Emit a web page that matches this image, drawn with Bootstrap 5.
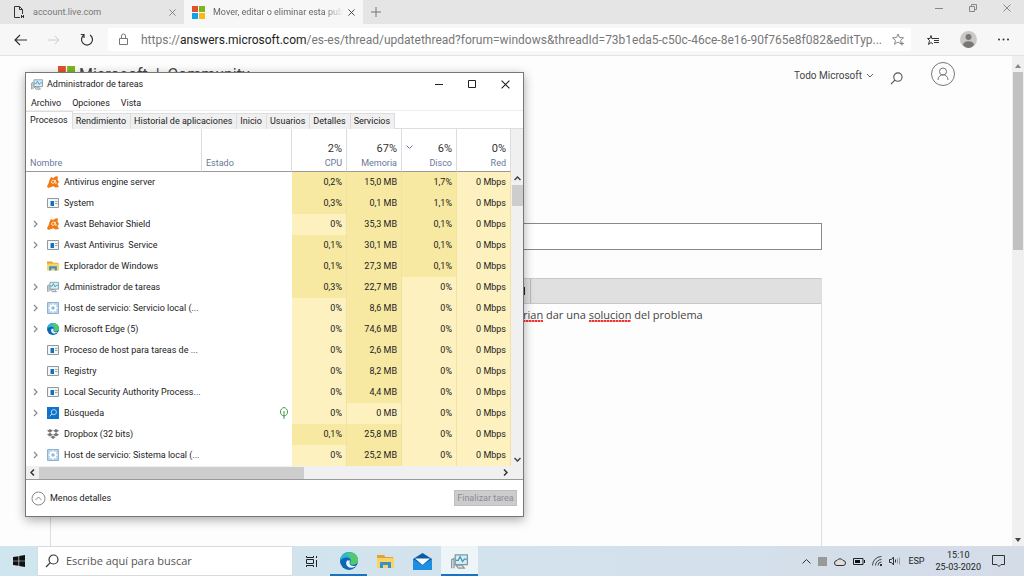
<!DOCTYPE html>
<html lang="es">
<head>
<meta charset="utf-8">
<meta name="viewport" content="width=device-width, initial-scale=1">
<title>Administrador de tareas</title>
<link href="https://cdn.jsdelivr.net/npm/bootstrap@5.3.0/dist/css/bootstrap.min.css" rel="stylesheet">
<style>
body{font-family:Roboto,"Open Sans","Noto Sans",sans-serif;font-size:9px;line-height:12px;color:#222;background:#fdfdfd}
button{font:inherit;color:inherit;background:none;border:0;padding:0}
a{color:inherit;text-decoration:none}
svg{display:block;flex:none}
input:focus{outline:0}
/* browser */
.tabstrip{height:24px;background:#e5e5e5;color:#777}
.btab{width:184px;padding:0 8px 0 13px}
.btab.on{background:#f7f7f7;width:179px;padding-left:8px;color:#666}
.fade-end{-webkit-mask-image:linear-gradient(90deg,#000 85%,transparent);mask-image:linear-gradient(90deg,#000 85%,transparent)}
.win-ctl{gap:26px;padding:4px 13px 0 0}
.toolbar{height:32px;background:#f7f7f7;border-bottom:1px solid #e3e3e3;padding:0 14px}
.nav-ctl{gap:20px;margin-right:14px}
.addr{height:23px;background:#fff;border-radius:2px;padding:0 6px 0 10px;font-size:12px;line-height:16px;color:#777}
.addr b{font-weight:400;color:#222}
.site-head{height:167px;padding:6px 57px 0 58px}
.brand{font-size:16px;line-height:22px;margin-top:2px;color:#444;font-weight:400}
.todo{font-size:10px;color:#444}
.site-form{margin-left:50px;margin-right:190px}
.title-box{height:27px;border:1px solid #888;background:#fff;margin-bottom:28px;width:100%}
.editor{border:1px solid #ddd;border-color:#c8c8c8 #ddd;border-bottom:0}
.ed-bar{height:25px;background:#e0e0e0;border-bottom:1px solid #c8c8c8;padding-left:450px}
.ed-bar button{width:30px;height:24px;border-right:1px solid #bbb;padding-right:5px}
.ed-text{padding:3px 8px 0 472px;font-size:11px;line-height:16px;color:#444;white-space:nowrap;font-family:"Open Sans","Noto Sans",sans-serif}
.ed-text u{text-decoration:none;background:repeating-linear-gradient(90deg,#e33 0 2px,#f99 2px 3px) 0 100%/100% 2px no-repeat}
.vbar{width:12px;background:#f0f0f0}
.vbar i{background:#c1c1c1;height:178px;width:10px}
/* task manager */
.tm{left:25px;top:72px;width:499px;border:1px solid #777;background:#fff;box-shadow:0 3px 10px #0005}
.tm-title{height:22px;padding:0 9px 0 5px}
.tm-menu{height:16px;gap:11px;padding-left:5px;border-bottom:1px solid #eee}
.tm-tabs{height:18px;border-bottom:1px solid #ddd;padding-top:2px}
.tm-tabs button{height:16px;background:#f0f0f0;border:1px solid #ddd;border-left:0;border-bottom:0;padding:0 4px 1px 3px;text-align:center}
.tm-tabs button.on{height:18px;margin-top:-2px;background:#fff;padding:0 4px 2px}
.procs{table-layout:fixed;width:485px;border-collapse:separate;border-spacing:0}
.procs th{font-weight:400;color:#68789a;height:43px;padding:0 5px 2px 4px;vertical-align:bottom;border-right:1px solid #ddd;border-bottom:1px solid #999}
.procs th.num strong{display:block;font-weight:400;font-size:11px;line-height:16px;color:#333}
.procs td{height:21px;padding:0 0 1px;white-space:nowrap}
.procs .num{text-align:right;padding-right:4px}
.procs td.num{background:#fdf1bf;border-right:1px solid #f0e2a4}
.procs td.hi{background:#f7e9a2}
.cell{gap:5px;padding-left:6px}
.tm-v{background:#f0f0f0;padding-top:43px}
.tm-v i{background:#cdcdcd;height:21px;width:11px}
.tm-h{height:14px;background:#f0f0f0;border-bottom:1px solid #999;padding-right:15px}
.tm-h i{background:#cdcdcd;width:265px;height:12px}
.tm-foot{height:36px;padding:0 6px 0 5px}
.end-btn{background:#ccc;border:1px solid #bfbfbf;color:#8a8d96;height:16px;width:63px}
/* taskbar */
.taskbar{height:30px;background:linear-gradient(90deg,#cfe6ee,#d3e3ed 45%,#d4dce8)}
.tb-btn{width:37px;height:30px;display:flex;align-items:center;justify-content:center}
.tb-run{box-shadow:inset 0 -2px #1874c0}
.tb-on{background:#eef5f9}
.tb-search{width:256px;background:#fff;border:1px solid #d5dde0;padding-left:7px;gap:7px}
.tb-search input{border:0;font-size:11px;line-height:16px;width:200px;padding:0;color:#555;background:none;font-family:"Open Sans","Noto Sans",sans-serif}
.tb-search input::placeholder{color:#555;opacity:1}
.tray{gap:7px;padding-right:18px}
</style>
</head>
<body>
<svg width="0" height="0" class="position-absolute" aria-hidden="true">
<symbol id="i-ms" viewBox="0 0 13 13"><path fill="#e0522a" d="M0 0h6v6H0z"/><path fill="#7db51e" d="M7 0h6v6H7z"/><path fill="#12a0e8" d="M0 7h6v6H0z"/><path fill="#fbb915" d="M7 7h6v6H7z"/></symbol>
<symbol id="i-x" viewBox="0 0 8 8"><path d="M.5.5l7 7m0-7l-7 7" stroke="currentColor" fill="none"/></symbol>
<symbol id="i-chev" viewBox="0 0 10 10"><path d="M2 2l3 3-3 3" stroke="currentColor" stroke-width="1.200" fill="none"/></symbol>
<symbol id="i-avast" viewBox="0 0 12 12"><path fill="#f27a13" d="M4 1l2 1 3-1.800L11 .5l-.5 3L12 6l-1.500 2 1.500 3-3.500.5-2-1.300L1 12 0 10l1.500-2.500L2.500 4z"/><path d="M8 4.500c-1.500-1-3.500 0-3.500 1.500s2.500 2 3.200.2L8.200 4v3c.4.800 1.300.6 1.400-.4" stroke="#fff" fill="none" stroke-width=".8"/></symbol>
<symbol id="i-app" viewBox="0 0 12 10"><path d="M.5.500h11v9H.5z" fill="#f2f5f6" stroke="#909a9f"/><path d="M2 2h5v6H2z" fill="#fff"/><path d="M3.500 3h3.500v5H3.500z" fill="#1670b8"/><path d="M8 3.500h2.500M8 5.500h2.500" stroke="#9aa"/></symbol>
<symbol id="i-folder" viewBox="0 0 17 15"><path fill="#dfa52f" d="M0 1h7l1.500 2H16v5H0z"/><path fill="#f9d366" d="M0 4h17v10H0z"/><path fill="#3793c6" d="M3 8h11v6h-3v-3H6v3H3z"/></symbol>
<symbol id="i-tm" viewBox="0 0 14 12"><path d="M3.500.500h10v8h-10z" fill="#d5edf5" stroke="#82969e"/><path d="M4 5h2l1.500-3 2 4L11 4h2" fill="none" stroke="#3f98b6"/><path d="M.5 11.500v-7l2-1v8M4 9h5l2 2.500H6z" fill="#dce3e5" stroke="#8b989d"/></symbol>
<symbol id="i-gear" viewBox="0 0 12 12"><path d="M.5.500h11v11H.5z" fill="#b4d2ea" stroke="#8fb4d2"/><path d="M6 1.500v9M1.500 6h9M2.800 2.800l6.400 6.400M9.200 2.800L2.800 9.200" stroke="#fff" stroke-width="1.600"/><circle cx="6" cy="6" r="2.500" fill="#8dbbe0" stroke="#fff" stroke-width="1.500"/></symbol>
<symbol id="i-edge" viewBox="0 0 18 18"><circle cx="9" cy="9" r="9" fill="#0b66b8"/><path d="M.3 7C1.500 2.500 5 0 9 0c5 0 9 3.600 9 8 0 3-2.200 4.700-4.800 4.700-2.500 0-3.200-1.200-2.700-2.200C12 7.500 9 5.500 6.200 5.500 3.500 5.500 1 7 .3 9z" fill="#2fb7cf"/><path d="M11 .3c4 .8 7 4 7 7.700 0 3-2.200 4.700-4.800 4.700-2.500 0-3.200-1.200-2.700-2.200 2-4-.5-7-4-7.500z" fill="#55c96a"/><path d="M7 8.500c-2 3-.3 7 4 7.200 2.300.1 4.500-1 5.700-2.200-2.500 1-7.200 1-7.200-3 0-.8.500-1.300.8-2z" fill="#e8f5fa"/></symbol>
<symbol id="i-mag" viewBox="0 0 14 14"><circle cx="8.500" cy="5.500" r="4.500" fill="none" stroke="currentColor" stroke-width="1.200"/><path d="M5.300 8.700L1 13" stroke="currentColor" stroke-width="1.200"/></symbol>
<symbol id="i-drop" viewBox="0 0 12 10"><path fill="#777" d="M3 0l3 1.800-3 1.900L0 1.800zm6 0l3 1.800-3 1.900-3-1.900zM3 3.800l3 1.900-3 1.900-3-1.900zm6 0l3 1.900-3 1.900-3-1.900zM6 6.600l2.500 1.600L6 10 3.500 8.200z"/><path fill="#fff" d="M6 2l2.500 1.800L6 5.500 3.500 3.800z"/></symbol>
</svg>

<div class="d-flex flex-column vh-100 overflow-hidden position-relative">
  <header>
    <div class="tabstrip d-flex align-items-stretch">
      <div class="btab d-flex align-items-center">
        <svg width="12" height="13" viewBox="0 0 12 13" class="me-2" fill="none" stroke="#333"><path d="M9.500 8V3.500l-3-3h-5v11H7M6.500.500v3h3"/><path d="M8 9l3 3m0-3l-3 3m0-1.500h3"/></svg>
        <span class="flex-grow-1">account.live.com</span>
        <button aria-label="Cerrar pestaña"><svg width="7" height="7"><use href="#i-x"/></svg></button>
      </div>
      <div class="btab on d-flex align-items-center">
        <svg width="13" height="13" class="me-2"><use href="#i-ms"/></svg>
        <span class="flex-grow-1 overflow-hidden text-nowrap fade-end me-1">Mover, editar o eliminar esta pub</span>
        <button aria-label="Cerrar pestaña"><svg width="7" height="7" color="#333"><use href="#i-x"/></svg></button>
      </div>
      <button class="px-2" aria-label="Nueva pestaña"><svg width="10" height="10" stroke="#777"><path d="M5 0v10M0 5h10"/></svg></button>
      <div class="win-ctl ms-auto d-flex align-items-start">
        <button aria-label="Minimizar"><svg width="8" height="8" stroke="#888"><path d="M0 4.500h8"/></svg></button>
        <button aria-label="Restaurar"><svg width="8" height="8" fill="none" stroke="#888"><path d="M.5 2.500h5v5h-5zM2.500 2V.500h5v5H6"/></svg></button>
        <button aria-label="Cerrar"><svg width="8" height="8" color="#888"><use href="#i-x"/></svg></button>
      </div>
    </div>
    <div class="toolbar d-flex align-items-center">
      <div class="nav-ctl d-flex align-items-center">
        <button aria-label="Atrás"><svg width="14" height="12" fill="none" stroke="#333" stroke-width="1.200"><path d="M13 6H1m5-5L1 6l5 5"/></svg></button>
        <button aria-label="Adelante"><svg width="12" height="12" fill="none" stroke="#ccc"><path d="M0 6h11M7 2l4 4-4 4"/></svg></button>
        <button aria-label="Actualizar"><svg width="14" height="14" fill="none" stroke="#333" stroke-width="1.200"><path d="M4 2a5.500 5.500 0 1 0 6 0M4 5V1.500H.8"/></svg></button>
      </div>
      <div class="addr d-flex align-items-center flex-grow-1 overflow-hidden">
        <svg width="11" height="13" fill="none" stroke="#777" class="me-2"><path d="M1.500 5.500h8v6h-8zM3.500 5V3a2 2 0 0 1 4 0v2"/></svg>
        <span class="flex-grow-1 text-nowrap ms-1">https://<b>answers.microsoft.com</b>/es-es/thread/updatethread?forum=windows&amp;threadId=73b1eda5-c50c-46ce-8e16-90f765e8f082&amp;editTyp...</span>
        <button aria-label="Favorito"><svg width="13" height="13" fill="none" stroke="#888"><path d="M6 1l1.500 3.500 4 .3-3 2.500 1 4L6 9l-3.500 2.300 1-4-3-2.500 4-.3zM8 10.500h4M10 8.500v4"/></svg></button>
      </div>
      <div class="d-flex align-items-center ms-3 gap-3">
        <button aria-label="Favoritos"><svg width="13" height="12" fill="none" stroke="#333"><path d="M6 4.500H4.800L4 1.500 3 4.500H.5l2 2-1 4L4 8.500l2 1.500M6 4.500h6M7 6.500h5M7 8.500h5"/></svg></button>
        <button class="ms-1" aria-label="Perfil"><svg width="17" height="17"><circle cx="8.500" cy="8.500" r="8.500" fill="#ccc8c6"/><circle cx="8.500" cy="6" r="3" fill="#777"/><path d="M3 14c0-5 11-5 11 0-3 4-8 4-11 0z" fill="#777"/></svg></button>
        <button class="ms-1" aria-label="Más"><svg width="13" height="3" fill="#333"><circle cx="2" cy="1.500" r="1"/><circle cx="6.500" cy="1.500" r="1"/><circle cx="11" cy="1.500" r="1"/></svg></button>
      </div>
    </div>
  </header>

  <div class="d-flex flex-grow-1 overflow-hidden">
    <main class="flex-grow-1 d-flex flex-column overflow-hidden">
      <div class="site-head d-flex align-items-start">
        <svg width="17" height="17" class="mt-1 me-1"><use href="#i-ms"/></svg>
        <span class="brand">Microsoft&nbsp; | &nbsp;Community</span>
        <div class="ms-auto d-flex align-items-center">
          <a href="#" class="todo me-1">Todo Microsoft</a>
          <svg width="8" height="6" fill="none" stroke="#666"><path d="M1 1l3 3 3-3"/></svg>
          <svg width="13" height="13" color="#555" class="ms-3 mt-1 me-4"><use href="#i-mag"/></svg>
          <svg width="24" height="24" fill="none" stroke="#777" class="ms-1 mb-1"><circle cx="12" cy="12" r="11.500"/><circle cx="12" cy="9.500" r="3.500"/><path d="M7 18c0-7 10-7 10 0"/></svg>
        </div>
      </div>
      <form class="site-form flex-grow-1 d-flex flex-column">
        <input class="title-box flex-shrink-0" aria-label="Título">
        <div class="editor flex-grow-1">
          <div class="ed-bar"><button type="button" aria-label="Formato"><svg width="3" height="8" class="ms-auto"><path d="M0 0h3v8H0z" fill="#223"/></svg></button></div>
          <div class="ed-text" contenteditable="true" spellcheck="false"><u>rian</u> dar una <u>solucion</u> del problema</div>
        </div>
      </form>
    </main>
    <div class="vbar d-flex flex-column align-items-center py-1">
      <svg width="6" height="4" fill="#888" class="my-1"><path d="M3 0l3 4H0z"/></svg><i></i>
      <svg width="6" height="4" fill="#444" class="mt-auto"><path d="M0 0h6L3 4z"/></svg>
    </div>
  </div>

  <section class="tm position-absolute">
    <div class="tm-title d-flex align-items-center">
      <svg width="12" height="11" class="me-1"><use href="#i-tm"/></svg><span>Administrador de tareas</span>
      <div class="ms-auto d-flex align-items-center gap-4">
        <button aria-label="Minimizar"><svg width="9" height="9" stroke="#222"><path d="M0 4.500h8"/></svg></button>
        <button aria-label="Maximizar"><svg width="9" height="9" fill="none" stroke="#222"><path d="M.5.500h7v7h-7z"/></svg></button>
        <button class="pe-1" aria-label="Cerrar"><svg width="9" height="9"><use href="#i-x"/></svg></button>
      </div>
    </div>
    <nav class="tm-menu d-flex align-items-center"><a href="#">Archivo</a><a href="#">Opciones</a><a href="#">Vista</a></nav>
    <div class="tm-tabs d-flex">
      <button class="on">Procesos</button><button>Rendimiento</button><button>Historial de aplicaciones</button><button>Inicio</button><button>Usuarios</button><button>Detalles</button><button>Servicios</button>
    </div>
    <div class="d-flex">
      <table class="procs">
        <colgroup><col style="width:176px"><col style="width:90px"><col style="width:55px"><col style="width:55px"><col style="width:55px"><col style="width:54px"></colgroup>
        <thead><tr><th>Nombre</th><th>Estado</th><th class="num"><strong>2%</strong>CPU</th><th class="num"><strong>67%</strong>Memoria</th><th class="num"><strong><svg width="7" height="5" fill="none" stroke="#68789a" class="float-start mt-1"><path d="M.5.500l3 3 3-3"/></svg>6%</strong>Disco</th><th class="num"><strong>0%</strong>Red</th></tr></thead>
        <tbody id="rows"></tbody>
      </table>
      <div class="tm-v d-flex flex-column align-items-center flex-grow-1">
        <svg width="7" height="5" fill="none" stroke="#444" stroke-width="1.500" class="my-1"><path d="M.5 4l3-3 3 3"/></svg><i></i>
        <svg width="7" height="5" fill="none" stroke="#444" stroke-width="1.500" class="mt-auto mb-1"><path d="M.5 1l3 3 3-3"/></svg>
      </div>
    </div>
    <div class="tm-h d-flex align-items-center">
      <svg width="5" height="7" fill="none" stroke="#333" stroke-width="1.500" class="mx-1"><path d="M4 .500l-3 3 3 3"/></svg><i></i>
      <svg width="5" height="7" fill="none" stroke="#333" stroke-width="1.500" class="ms-auto"><path d="M1 .500l3 3-3 3"/></svg>
    </div>
    <div class="tm-foot d-flex align-items-center justify-content-between">
      <button class="d-flex align-items-center gap-1"><svg width="15" height="15" fill="none" stroke="#888"><circle cx="7.500" cy="7.500" r="6.500"/><path d="M4.500 9l3-3 3 3"/></svg>Menos detalles</button>
      <button class="end-btn" disabled>Finalizar tarea</button>
    </div>
  </section>

  <footer class="taskbar d-flex align-items-stretch flex-shrink-0">
    <button class="tb-btn" aria-label="Inicio"><svg width="12" height="12" fill="#111"><path d="M0 2l5.500-.8v4.500H0zM6.200 1L12 0v5.700H6.200zM0 6.300h5.500v4.500L0 10zM6.200 6.300H12V12l-5.800-1z"/></svg></button>
    <label class="tb-search d-flex align-items-center"><svg width="14" height="14" color="#333"><use href="#i-mag"/></svg><input placeholder="Escribe aquí para buscar" aria-label="Buscar"></label>
    <button class="tb-btn" aria-label="Vista de tareas"><svg width="13" height="11" fill="none" stroke="#222"><path d="M1.500 3.500h7v4h-7zM1.500 0v1.500h7V0M1.500 11V9.500h7V11M11.500 0v2M11.500 4v7"/></svg></button>
    <button class="tb-btn tb-run" aria-label="Microsoft Edge"><svg width="18" height="18"><use href="#i-edge"/></svg></button>
    <button class="tb-btn" aria-label="Explorador"><svg width="17" height="15"><use href="#i-folder"/></svg></button>
    <button class="tb-btn" aria-label="Correo"><svg width="19" height="17"><path d="M0 6l9.500-6L19 6v11H0z" fill="#0a5ea8"/><path d="M2 5.500h15L9.500 12z" fill="#f4fafd"/><path d="M0 6l9.500 6L19 6v11H0z" fill="#1e8fe0"/></svg></button>
    <button class="tb-btn tb-run tb-on" aria-label="Administrador de tareas"><svg width="17" height="15"><use href="#i-tm"/></svg></button>
    <div class="tray ms-auto d-flex align-items-center">
      <svg width="9" height="6" fill="none" stroke="#333"><path d="M.5 5.500l4-4 4 4"/></svg>
      <svg width="9" height="9"><path d="M0 0h9v9H0z" fill="#999"/></svg>
      <svg width="12" height="9" stroke="#333" fill="#ddd"><path d="M3 8.500a2.500 2.500 0 0 1 0-5 3.500 3.500 0 0 1 6 0 2.500 2.500 0 0 1 0 5z"/></svg>
      <svg width="12" height="7"><path d="M.5.500h9.500v6H.5z" fill="none" stroke="#222"/><path d="M2 2h5v3H2zM11 2h1v3h-1z" fill="#111"/></svg>
      <svg width="10" height="10" fill="none" stroke="#444"><path d="M.5 9.500a9 9 0 0 1 9-9M3.500 9.500a6 6 0 0 1 6-6M6 9.500a3.500 3.500 0 0 1 3.500-3.500"/><path d="M8 8h2v2H8z" fill="#333" stroke="none"/></svg>
      <svg width="12" height="10" fill="none" stroke="#333"><path d="M.5 3.500h2l2-2.500v8l-2-2.500h-2zM6.500 3.500v3"/><path d="M8.500 2.500v5M10.500 1.500v7" stroke="#999"/></svg>
      <span>ESP</span>
      <div class="text-center text-nowrap ms-1">15:10<br>25-03-2020</div>
      <svg width="14" height="12" fill="none" stroke="#333" class="ms-1"><path d="M.5.500h12v9H9l-2 2-2-2H.5z"/></svg>
    </div>
  </footer>
</div>

<script>
// icon, expandable, name, CPU, memory, disk
const procs = [
  ["avast",0,"Antivirus engine server","0,2%","15,0 MB","1,7%"],
  ["app",0,"System","0,3%","0,1 MB","1,1%"],
  ["avast",1,"Avast Behavior Shield","0%","35,3 MB","0,1%"],
  ["app",1,"Avast Antivirus\u00a0 Service","0,1%","30,1 MB","0,1%"],
  ["folder",0,"Explorador de Windows","0,1%","27,3 MB","0,1%"],
  ["tm",1,"Administrador de tareas","0,3%","22,7 MB","0%"],
  ["gear",1,"Host de servicio: Servicio local (...","0%","8,6 MB","0%"],
  ["edge",1,"Microsoft Edge (5)","0%","74,6 MB","0%"],
  ["app",0,"Proceso de host para tareas de ...","0%","2,6 MB","0%"],
  ["app",0,"Registry","0%","8,2 MB","0%"],
  ["app",1,"Local Security Authority Process...","0%","4,4 MB","0%"],
  ["find",1,"Búsqueda","0%","0 MB","0%"],
  ["drop",0,"Dropbox (32 bits)","0,1%","25,8 MB","0%"],
  ["gear",1,"Host de servicio: Sistema local (...","0%","25,2 MB","0%"]
];
const icon = n => n === "find"
  ? '<svg width="12" height="12" viewBox="0 0 12 12" color="#fff"><path fill="#0f73cc" d="M0 0h12v12H0z"/><use href="#i-mag" x="2" y="2" width="8" height="8"/></svg>'
  : `<svg width="12" height="12"><use href="#i-${n}"/></svg>`;
const leaf = '<svg width="8" height="12" fill="none" stroke="#3f9b46" class="ms-auto"><path d="M4 12V4M4 9C1 8.500.5 6.500.5 5 .5 2.500 2 1 4 .500 6 1 7.500 2.500 7.500 5S6 8.500 4 9z"/></svg>';
const num = v => `<td class="num${/^0(%| MB)/.test(v) ? "" : " hi"}">${v}</td>`;
document.getElementById("rows").innerHTML = procs.map(([i,open,name,cpu,mem,disk]) =>
  `<tr><td><div class="cell d-flex align-items-center"><svg width="10" height="10" color="#888">${open ? '<use href="#i-chev"/>' : ""}</svg>${icon(i)}<span>${name}</span></div></td>` +
  `<td class="pe-1">${i === "find" ? leaf : ""}</td>${num(cpu)}${num(mem)}${num(disk)}<td class="num">0 Mbps</td></tr>`).join("");
</script>
<script src="https://cdn.jsdelivr.net/npm/bootstrap@5.3.0/dist/js/bootstrap.bundle.min.js"></script>
</body>
</html>
